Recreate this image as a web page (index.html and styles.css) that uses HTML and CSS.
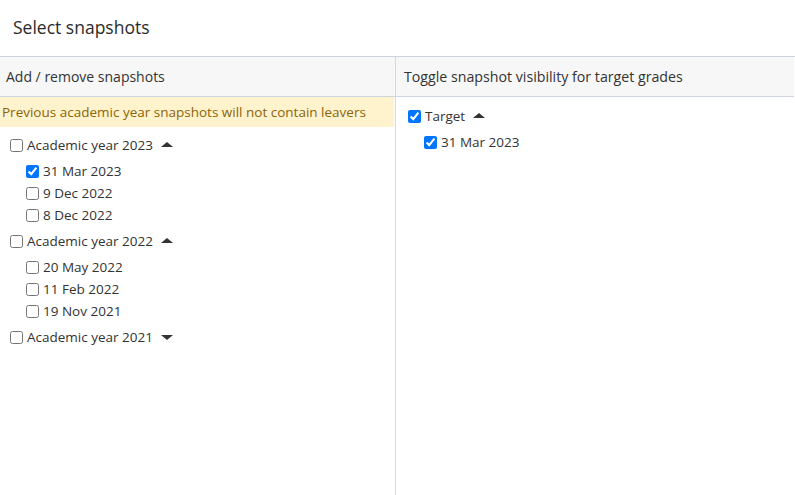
FILE: index.html
```html
<!DOCTYPE html>
<html>
<head>
<meta charset="utf-8">
<link rel="stylesheet" href="styles.css">
</head>
<body>
<h1 class="title">Select snapshots</h1>
<div class="panel">
  <div class="col col-left">
    <div class="col-head">Add / remove snapshots</div>
    <div class="warning">Previous academic year snapshots will not contain leavers</div>
    <div class="tree">
      <div class="group">
        <label class="row row-group"><input type="checkbox"><span>Academic year 2023</span><span class="caret up"></span></label>
        <label class="row row-child"><input type="checkbox" checked><span>31 Mar 2023</span></label>
        <label class="row row-child"><input type="checkbox"><span>9 Dec 2022</span></label>
        <label class="row row-child"><input type="checkbox"><span>8 Dec 2022</span></label>
      </div>
      <div class="group">
        <label class="row row-group"><input type="checkbox"><span>Academic year 2022</span><span class="caret up"></span></label>
        <label class="row row-child"><input type="checkbox"><span>20 May 2022</span></label>
        <label class="row row-child"><input type="checkbox"><span>11 Feb 2022</span></label>
        <label class="row row-child"><input type="checkbox"><span>19 Nov 2021</span></label>
      </div>
      <div class="group">
        <label class="row row-group"><input type="checkbox"><span>Academic year 2021</span><span class="caret down"></span></label>
      </div>
    </div>
  </div>
  <div class="col col-right">
    <div class="col-head">Toggle snapshot visibility for target grades</div>
    <div class="tree tree-right">
      <div class="group">
        <label class="row row-group"><input type="checkbox" checked><span>Target</span><span class="caret up"></span></label>
        <label class="row row-child"><input type="checkbox" checked><span>31 Mar 2023</span></label>
      </div>
    </div>
  </div>
</div>
</body>
</html>
```
FILE: styles.css
```css
html, body {
  margin: 0;
  padding: 0;
  background: #fff;
}
body {
  font-family: "Open Sans", "Noto Sans", "Liberation Sans", sans-serif;
  color: #333;
  height: 495px;
  display: flex;
  flex-direction: column;
  overflow: hidden;
}
.title {
  margin: 0;
  height: 56px;
  box-sizing: border-box;
  padding: 15px 0 0 13px;
  font-size: 17.5px;
  font-weight: 500;
  color: #2b2b2b;
}
.panel {
  flex: 1;
  display: grid;
  grid-template-columns: 396px 398px;
  border-top: 1px solid #cfd5de;
}
.col {
  display: flex;
  flex-direction: column;
}
.col-left {
  border-right: 1px solid #d9d9d9;
}
.col-head {
  height: 40px;
  box-sizing: border-box;
  background: #f7f7f7;
  border-bottom: 1px solid #cfd5de;
  font-size: 14px;
  font-weight: 500;
  color: #333;
  display: flex;
  align-items: center;
  padding-left: 6px;
}
.col-right .col-head {
  padding-left: 8px;
  font-size: 14.2px;
}
.warning {
  height: 30px;
  box-sizing: border-box;
  background: #fff3cd;
  color: #8a6508;
  font-size: 13.5px;
  display: flex;
  align-items: center;
  padding-left: 2px;
  margin-right: 1px;
}
.tree {
  padding: 3px 0 0 6px;
}
.tree-right {
  padding: 4px 0 0 8px;
}
.row {
  display: flex;
  align-items: center;
  font-size: 13.5px;
  color: #333;
}
.row input {
  margin: 0 4px 0 4px;
  width: 13px;
  height: 13px;
}
.row-group {
  height: 30px;
}
.row-child {
  height: 22px;
  padding-left: 16px;
}
.caret {
  width: 0;
  height: 0;
  margin-left: 8px;
  border-left: 6px solid transparent;
  border-right: 6px solid transparent;
}
.caret.up {
  border-bottom: 5px solid #333;
  margin-top: -1px;
}
.caret.down {
  border-top: 5px solid #333;
  margin-top: 1px;
}
```
